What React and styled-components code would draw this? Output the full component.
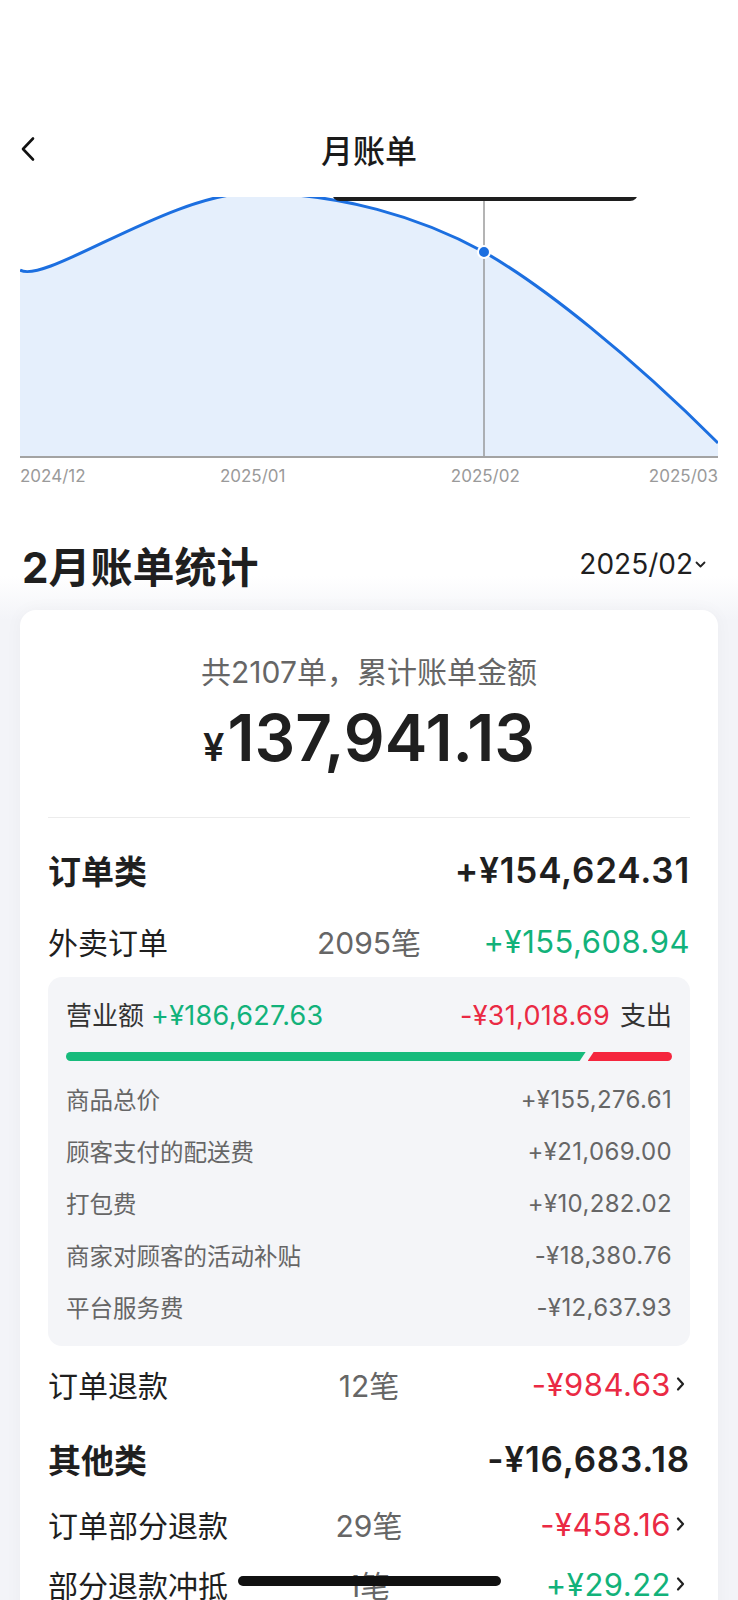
import React from 'react'
import styled, { createGlobalStyle } from 'styled-components'

const GlobalStyle = createGlobalStyle`
  html, body {
    margin: 0;
    padding: 0;
    background: #fff;
  }
  body {
    font-family: Inter, "Noto Sans CJK SC", sans-serif;
    color: #1f1f1f;
    -webkit-font-smoothing: antialiased;
  }
`

const Page = styled.div`
  width: 738px;
  min-height: 1600px;
  background: #fff;
  overflow: hidden;
`

const StatusBar = styled.div`
  height: 100px;
`

const NavBar = styled.div`
  height: 97px;
  display: grid;
  grid-template-columns: 80px 1fr 80px;
  align-items: center;
  padding: 0 20px;
`

const BackButton = styled.button`
  display: flex;
  align-items: center;
  padding: 0;
  border: none;
  background: none;
  cursor: pointer;
`

const NavTitle = styled.h1`
  margin: 0;
  text-align: center;
  font-size: 32px;
  font-weight: 500;
  color: #1a1a1a;
`

const ChartBox = styled.div`
  position: relative;
  margin: 0 20px;
  height: 261px;
  overflow: hidden;

  svg {
    display: block;
  }
`

const Tooltip = styled.div`
  position: absolute;
  top: -40px;
  left: 312px;
  width: 306px;
  height: 44px;
  border-radius: 8px;
  background: #1e1e1e;
`

const AxisLabels = styled.div`
  display: grid;
  grid-template-columns: 1fr 2fr 2fr 1fr;
  margin: 8px 20px 0;
  font-size: 17px;
  line-height: 20px;
  color: #9a9a9a;
`

const AxisLabel = styled.span`
  text-align: ${(p) => p.$align};
`

const StatsSection = styled.section`
  padding: 52px 20px 120px;
  background: linear-gradient(180deg, #fff 0, #fff 90px, #f3f4f8 134px);
`

const SectionHead = styled.div`
  display: flex;
  justify-content: space-between;
  align-items: center;
  height: 52px;
`

const SectionTitle = styled.h2`
  margin: 0 0 0 2px;
  font-size: 42px;
  font-weight: 700;
  color: #1f1f1f;
`

const MonthPicker = styled.div`
  display: flex;
  align-items: center;
  font-size: 28px;
  color: #1f1f1f;
  margin-right: 12px;

  svg {
    margin-left: 2px;
  }
`

const Card = styled.div`
  margin-top: 20px;
  background: #fff;
  border-radius: 16px;
  padding: 44px 28px 40px;
  box-shadow: 0 0 18px rgba(20, 30, 60, 0.035);
`

const Summary = styled.div`
  text-align: center;
  font-size: 30px;
  line-height: 36px;
  color: #666;
`

const Total = styled.div`
  margin-top: 13px;
  height: 70px;
  text-align: center;
  font-size: 64px;
  line-height: 70px;
  font-weight: 600;
  color: #1f1f1f;
`

const Currency = styled.span`
  font-size: 38px;
  line-height: 38px;
  margin-right: 3px;
`

const Divider = styled.div`
  margin-top: 44px;
  height: 1px;
  background: #ececec;
`

const CategoryRow = styled.div`
  display: flex;
  justify-content: space-between;
  align-items: center;
  height: 70px;
  margin-top: ${(p) => p.$gap}px;
  font-size: 33px;
  font-weight: 600;
  color: #1f1f1f;
`

const CategoryAmount = styled.span`
  font-size: 35px;
  letter-spacing: 0.8px;
`

const ItemRow = styled.div`
  display: grid;
  grid-template-columns: 1fr auto 1fr;
  align-items: center;
  height: ${(p) => (p.$tall ? 72 : 60)}px;
  font-size: 30px;
`

const ItemName = styled.span`
  color: #1f1f1f;
`

const ItemCount = styled.span`
  color: #666;
  text-align: center;
`

const ItemAmount = styled.span`
  justify-self: end;
  display: flex;
  align-items: center;
  font-size: 31px;
  letter-spacing: 0.5px;
  color: ${(p) => p.$color};

  svg {
    margin: 0 5px 0 5px;
  }
`

const Breakdown = styled.div`
  background: #f4f5f8;
  border-radius: 14px;
  padding: 18px 18px 13px;
  margin-bottom: 8px;
`

const BreakdownHead = styled.div`
  display: flex;
  justify-content: space-between;
  align-items: center;
  height: 36px;
  font-size: 26px;
  color: #333;
`

const HeadAmount = styled.span`
  font-size: 27px;
  letter-spacing: 0.3px;
  color: ${(p) => p.$color};
  margin: ${(p) => (p.$left ? '0 0 0 7px' : '0 10px 0 0')};
`

const Bar = styled.div`
  display: flex;
  height: 9px;
  margin: 21px 0 12px;
`

const BarIn = styled.div`
  height: 100%;
  background: #17bb7c;
  border-radius: 5px 0 0 5px;
  clip-path: polygon(0 0, 100% 0, calc(100% - 6px) 100%, 0 100%);
`

const BarOut = styled.div`
  flex: 1;
  height: 100%;
  margin-left: 2px;
  background: #f5263e;
  border-radius: 0 5px 5px 0;
  clip-path: polygon(6px 0, 100% 0, 100% 100%, 0 100%);
`

const DetailRow = styled.div`
  display: flex;
  justify-content: space-between;
  align-items: center;
  height: 52px;
  font-size: 23.5px;
  color: #666;
`

const DetailValue = styled.span`
  font-size: 24px;
  letter-spacing: 0.35px;
`

const HomeIndicator = styled.div`
  position: fixed;
  left: 50%;
  bottom: 14px;
  width: 263px;
  height: 10px;
  margin-left: -131px;
  border-radius: 5px;
  background: #111;
`

const GREEN = '#12b27a'
const RED = '#ea2a44'

const ChevronRight = () => (
  <svg width="9" height="16" viewBox="0 0 9 16">
    <path d="M2 2.5 L7 8 L2 13.5" fill="none" stroke="#222" strokeWidth="2.2" strokeLinecap="round" strokeLinejoin="round" />
  </svg>
)

const curve =
  'M0 73 C25 88, 150 -4, 232 -4 C320 -4, 400 20, 464 55 C522 88, 610 158, 698 246'

const Chart = () => (
  <ChartBox>
    <svg width="698" height="261" viewBox="0 0 698 261">
      <path d={`${curve} L698 261 L0 261 Z`} fill="#e5effc" />
      <line x1="464" y1="0" x2="464" y2="261" stroke="#8c8c8c" strokeWidth="1.3" />
      <path d={curve} fill="none" stroke="#1c6fe0" strokeWidth="3" />
      <line x1="0" y1="260" x2="698" y2="260" stroke="#a3a3a3" strokeWidth="2" />
      <circle cx="464" cy="55" r="6" fill="#1c6fe0" stroke="#fff" strokeWidth="2" />
    </svg>
    <Tooltip />
  </ChartBox>
)

const details = [
  ['商品总价', '+¥155,276.61'],
  ['顾客支付的配送费', '+¥21,069.00'],
  ['打包费', '+¥10,282.02'],
  ['商家对顾客的活动补贴', '-¥18,380.76'],
  ['平台服务费', '-¥12,637.93'],
]

const income = 186627.63
const expense = 31018.69

const App = () => {
  const share = (income / (income + expense)) * 100

  return (
    <Page>
      <GlobalStyle />
      <StatusBar />
      <NavBar>
        <BackButton>
          <svg width="16" height="26" viewBox="0 0 16 26">
            <path d="M13 2.5 L3 13 L13 23.5" fill="none" stroke="#111" strokeWidth="2.6" strokeLinecap="round" strokeLinejoin="round" />
          </svg>
        </BackButton>
        <NavTitle>月账单</NavTitle>
        <span />
      </NavBar>

      <Chart />
      <AxisLabels>
        <AxisLabel $align="left">2024/12</AxisLabel>
        <AxisLabel $align="center">2025/01</AxisLabel>
        <AxisLabel $align="center">2025/02</AxisLabel>
        <AxisLabel $align="right">2025/03</AxisLabel>
      </AxisLabels>

      <StatsSection>
        <SectionHead>
          <SectionTitle>2月账单统计</SectionTitle>
          <MonthPicker>
            2025/02
            <svg width="11" height="7" viewBox="0 0 11 7">
              <path d="M1.5 1.5 L5.5 5.5 L9.5 1.5" fill="none" stroke="#222" strokeWidth="1.8" strokeLinecap="round" strokeLinejoin="round" />
            </svg>
          </MonthPicker>
        </SectionHead>

        <Card>
          <Summary>共2107单，累计账单金额</Summary>
          <Total>
            <Currency>¥</Currency>
            137,941.13
          </Total>
          <Divider />

          <CategoryRow $gap={17}>
            <span>订单类</span>
            <CategoryAmount>+¥154,624.31</CategoryAmount>
          </CategoryRow>
          <ItemRow $tall>
            <ItemName>外卖订单</ItemName>
            <ItemCount>2095笔</ItemCount>
            <ItemAmount $color={GREEN}>+¥155,608.94</ItemAmount>
          </ItemRow>

          <Breakdown>
            <BreakdownHead>
              <span>
                营业额
                <HeadAmount $left $color={GREEN}>+¥186,627.63</HeadAmount>
              </span>
              <span>
                <HeadAmount $color={RED}>-¥31,018.69</HeadAmount>
                支出
              </span>
            </BreakdownHead>
            <Bar>
              <BarIn style={{ width: `${share}%` }} />
              <BarOut />
            </Bar>
            {details.map(([name, value]) => (
              <DetailRow key={name}>
                <span>{name}</span>
                <DetailValue>{value}</DetailValue>
              </DetailRow>
            ))}
          </Breakdown>

          <ItemRow>
            <ItemName>订单退款</ItemName>
            <ItemCount>12笔</ItemCount>
            <ItemAmount $color={RED}>
              -¥984.63
              <ChevronRight />
            </ItemAmount>
          </ItemRow>

          <CategoryRow $gap={10}>
            <span>其他类</span>
            <CategoryAmount>-¥16,683.18</CategoryAmount>
          </CategoryRow>
          <ItemRow>
            <ItemName>订单部分退款</ItemName>
            <ItemCount>29笔</ItemCount>
            <ItemAmount $color={RED}>
              -¥458.16
              <ChevronRight />
            </ItemAmount>
          </ItemRow>
          <ItemRow>
            <ItemName>部分退款冲抵</ItemName>
            <ItemCount>1笔</ItemCount>
            <ItemAmount $color={GREEN}>
              +¥29.22
              <ChevronRight />
            </ItemAmount>
          </ItemRow>
        </Card>
      </StatsSection>
      <HomeIndicator />
    </Page>
  )
}

export default App
